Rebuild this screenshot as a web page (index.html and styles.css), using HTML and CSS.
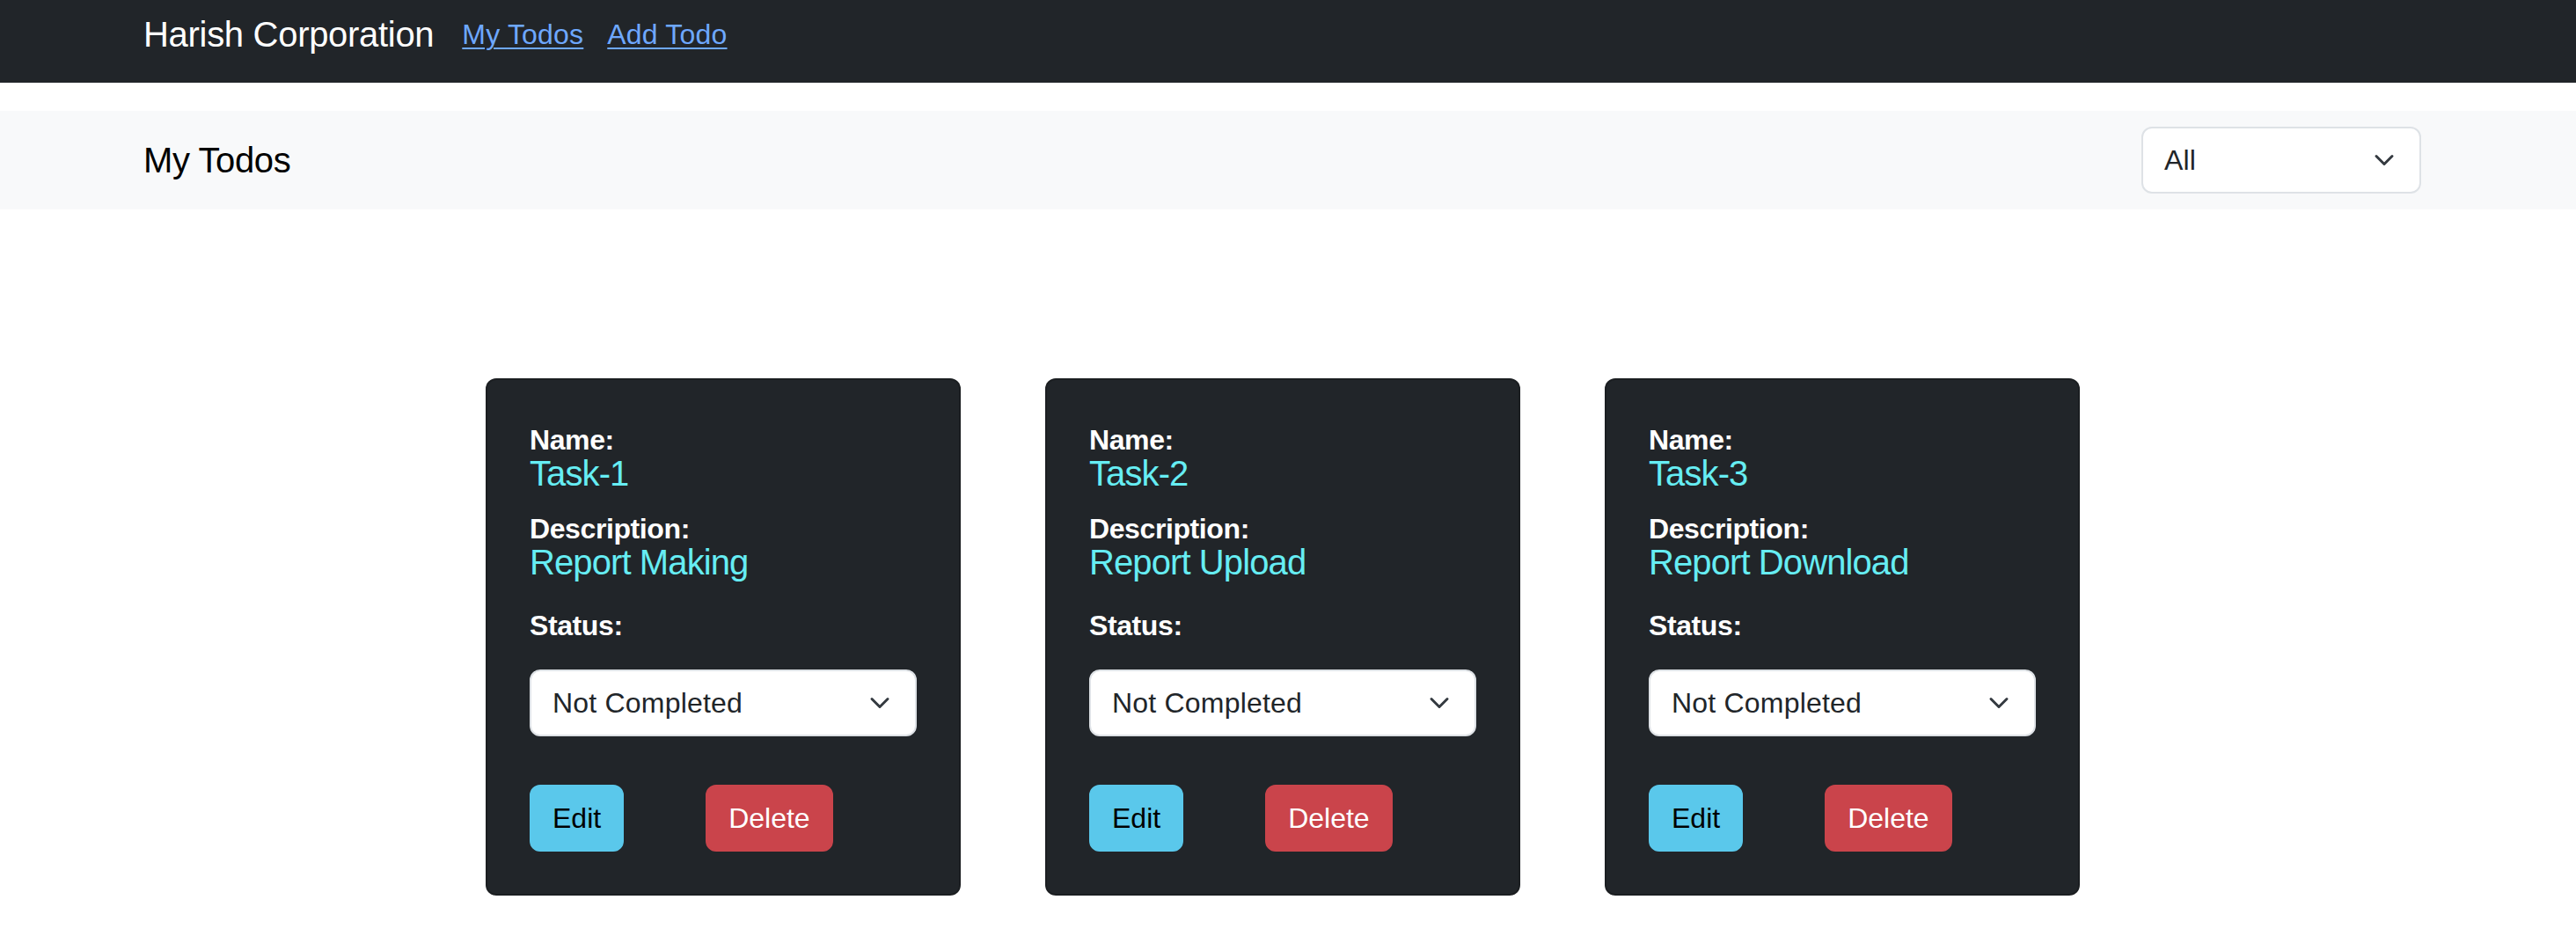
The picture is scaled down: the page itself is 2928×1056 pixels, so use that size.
FILE: index.html
```html
<!DOCTYPE html>
<html lang="en">
<head>
<meta charset="utf-8">
<title>Harish Corporation - My Todos</title>
<link rel="stylesheet" href="styles.css">
</head>
<body>
<nav class="navbar">
  <div class="container nav-inner">
    <span class="brand">Harish Corporation</span>
    <a class="nav-link" href="#">My Todos</a>
    <a class="nav-link" href="#">Add Todo</a>
  </div>
</nav>

<header class="subheader">
  <div class="container subheader-inner">
    <h5 class="page-title">My Todos</h5>
    <div class="select select-filter">
      <span>All</span>
      <svg class="chev" viewBox="0 0 16 16" width="32" height="24"><path d="M2 5l6 6 6-6" fill="none" stroke="#343a40" stroke-width="2" stroke-linecap="round" stroke-linejoin="round"/></svg>
    </div>
  </div>
</header>

<main class="cards">
  <div class="card">
    <div class="label">Name:</div>
    <div class="value">Task-1</div>
    <div class="label gap-desc">Description:</div>
    <div class="value">Report Making</div>
    <div class="label gap-status">Status:</div>
    <div class="select select-card">
      <span>Not Completed</span>
      <svg class="chev" viewBox="0 0 16 16" width="32" height="24"><path d="M2 5l6 6 6-6" fill="none" stroke="#343a40" stroke-width="2" stroke-linecap="round" stroke-linejoin="round"/></svg>
    </div>
    <div class="actions">
      <button class="btn btn-edit">Edit</button>
      <button class="btn btn-delete">Delete</button>
    </div>
  </div>

  <div class="card">
    <div class="label">Name:</div>
    <div class="value">Task-2</div>
    <div class="label gap-desc">Description:</div>
    <div class="value">Report Upload</div>
    <div class="label gap-status">Status:</div>
    <div class="select select-card">
      <span>Not Completed</span>
      <svg class="chev" viewBox="0 0 16 16" width="32" height="24"><path d="M2 5l6 6 6-6" fill="none" stroke="#343a40" stroke-width="2" stroke-linecap="round" stroke-linejoin="round"/></svg>
    </div>
    <div class="actions">
      <button class="btn btn-edit">Edit</button>
      <button class="btn btn-delete">Delete</button>
    </div>
  </div>

  <div class="card">
    <div class="label">Name:</div>
    <div class="value">Task-3</div>
    <div class="label gap-desc">Description:</div>
    <div class="value">Report Download</div>
    <div class="label gap-status">Status:</div>
    <div class="select select-card">
      <span>Not Completed</span>
      <svg class="chev" viewBox="0 0 16 16" width="32" height="24"><path d="M2 5l6 6 6-6" fill="none" stroke="#343a40" stroke-width="2" stroke-linecap="round" stroke-linejoin="round"/></svg>
    </div>
    <div class="actions">
      <button class="btn btn-edit">Edit</button>
      <button class="btn btn-delete">Delete</button>
    </div>
  </div>
</main>
</body>
</html>
```

FILE: styles.css
```css
* { box-sizing: border-box; }

html, body {
  margin: 0;
  padding: 0;
  background: #fff;
  font-family: "Liberation Sans", Arial, sans-serif;
  color: #212529;
}

.container {
  padding: 0 176px 0 163px;
}

/* Navbar */
.navbar {
  background: #212529;
  height: 94px;
  padding-top: 9px;
}

.nav-inner {
  display: flex;
  align-items: center;
  height: 60px;
}

.brand {
  font-size: 40px;
  line-height: 60px;
  color: #fff;
  letter-spacing: -0.3px;
  margin-right: 32px;
}

.nav-link {
  font-size: 32px;
  line-height: 48px;
  color: #6ea8fe;
  text-decoration: underline;
  text-decoration-thickness: 2px;
  text-underline-offset: 4px;
  letter-spacing: 0.2px;
  margin-right: 27px;
}

/* Sub header */
.subheader {
  margin-top: 32px;
  background: #f8f9fa;
  height: 112px;
}

.subheader-inner {
  height: 100%;
  display: flex;
  align-items: center;
  justify-content: space-between;
}

.page-title {
  margin: 0;
  font-size: 40px;
  line-height: 48px;
  font-weight: 400;
  color: #000;
  letter-spacing: -0.4px;
}

/* Select boxes */
.select {
  display: flex;
  align-items: center;
  justify-content: space-between;
  height: 76px;
  background: #fff;
  border: 2px solid #dee2e6;
  border-radius: 12px;
  padding: 0 24px 0 24px;
  font-size: 32px;
  color: #212529;
  letter-spacing: 0.2px;
}

.select-filter {
  width: 318px;
}

.chev {
  display: block;
  flex: none;
}

/* Cards */
.cards {
  display: flex;
  justify-content: center;
  gap: 96px;
  margin-top: 192px;
  padding-right: 12px;
}

.card {
  width: 540px;
  background: #212529;
  border: 2px solid rgba(0, 0, 0, 0.175);
  border-radius: 12px;
  padding: 50px 48px 48px 48px;
}

.label {
  font-size: 32px;
  line-height: 36px;
  font-weight: 700;
  color: #fff;
  letter-spacing: -0.4px;
}

.value {
  margin-top: 1px;
  font-size: 40px;
  line-height: 38px;
  color: #66edf3;
  letter-spacing: -0.9px;
}

.gap-desc {
  margin-top: 26px;
}

.gap-status {
  margin-top: 35px;
}

.select-card {
  width: 100%;
  margin-top: 32px;
}

.actions {
  display: flex;
  gap: 93px;
  margin-top: 55px;
}

.btn {
  height: 76px;
  padding: 0 24px;
  border: 2px solid transparent;
  border-radius: 12px;
  font-family: "Liberation Sans", Arial, sans-serif;
  font-size: 32px;
  line-height: 72px;
  cursor: pointer;
}

.btn-edit {
  background: #5ac8eb;
  border-color: #5ac8eb;
  color: #000;
}

.btn-delete {
  background: #ca444b;
  border-color: #ca444b;
  color: #fff;
}
```
